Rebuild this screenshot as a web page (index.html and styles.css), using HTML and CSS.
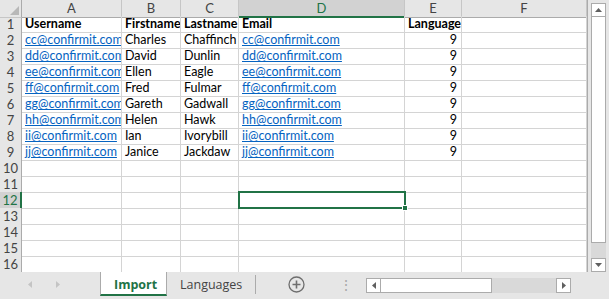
FILE: index.html
```html
<!DOCTYPE html>
<html lang="en">
  <head>
    <meta charset="UTF-8" />
    <meta name="viewport" content="width=device-width, initial-scale=1.0" />
    <title>Import - Workbook</title>
    <link rel="stylesheet" href="styles.css">
  </head>
  <body>
    <div class="workbook">
      <div class="main">
        <div class="sheet">
          <div class="row head">
            <div class="corner"></div>
            <div class="col-head">A</div>
            <div class="col-head">B</div>
            <div class="col-head">C</div>
            <div class="col-head active">D</div>
            <div class="col-head">E</div>
            <div class="col-head">F</div>
          </div>

          <div class="row">
            <div class="row-head">1</div>
            <div class="cell bold">Username</div>
            <div class="cell bold">Firstname</div>
            <div class="cell bold">Lastname</div>
            <div class="cell bold">Email</div>
            <div class="cell bold">Language</div>
            <div class="cell"></div>
          </div>
          <div class="row">
            <div class="row-head">2</div>
            <div class="cell link">cc@confirmit.com</div>
            <div class="cell">Charles</div>
            <div class="cell">Chaffinch</div>
            <div class="cell link">cc@confirmit.com</div>
            <div class="cell num">9</div>
            <div class="cell"></div>
          </div>
          <div class="row">
            <div class="row-head">3</div>
            <div class="cell link">dd@confirmit.com</div>
            <div class="cell">David</div>
            <div class="cell">Dunlin</div>
            <div class="cell link">dd@confirmit.com</div>
            <div class="cell num">9</div>
            <div class="cell"></div>
          </div>
          <div class="row">
            <div class="row-head">4</div>
            <div class="cell link">ee@confirmit.com</div>
            <div class="cell">Ellen</div>
            <div class="cell">Eagle</div>
            <div class="cell link">ee@confirmit.com</div>
            <div class="cell num">9</div>
            <div class="cell"></div>
          </div>
          <div class="row">
            <div class="row-head">5</div>
            <div class="cell link">ff@confirmit.com</div>
            <div class="cell">Fred</div>
            <div class="cell">Fulmar</div>
            <div class="cell link">ff@confirmit.com</div>
            <div class="cell num">9</div>
            <div class="cell"></div>
          </div>
          <div class="row">
            <div class="row-head">6</div>
            <div class="cell link">gg@confirmit.com</div>
            <div class="cell">Gareth</div>
            <div class="cell">Gadwall</div>
            <div class="cell link">gg@confirmit.com</div>
            <div class="cell num">9</div>
            <div class="cell"></div>
          </div>
          <div class="row">
            <div class="row-head">7</div>
            <div class="cell link">hh@confirmit.com</div>
            <div class="cell">Helen</div>
            <div class="cell">Hawk</div>
            <div class="cell link">hh@confirmit.com</div>
            <div class="cell num">9</div>
            <div class="cell"></div>
          </div>
          <div class="row">
            <div class="row-head">8</div>
            <div class="cell link">ii@confirmit.com</div>
            <div class="cell">Ian</div>
            <div class="cell">Ivorybill</div>
            <div class="cell link">ii@confirmit.com</div>
            <div class="cell num">9</div>
            <div class="cell"></div>
          </div>
          <div class="row">
            <div class="row-head">9</div>
            <div class="cell link">jj@confirmit.com</div>
            <div class="cell">Janice</div>
            <div class="cell">Jackdaw</div>
            <div class="cell link">jj@confirmit.com</div>
            <div class="cell num">9</div>
            <div class="cell"></div>
          </div>
          <div class="row">
            <div class="row-head">10</div>
            <div class="cell"></div><div class="cell"></div><div class="cell"></div>
            <div class="cell"></div><div class="cell"></div><div class="cell"></div>
          </div>
          <div class="row">
            <div class="row-head">11</div>
            <div class="cell"></div><div class="cell"></div><div class="cell"></div>
            <div class="cell"></div><div class="cell"></div><div class="cell"></div>
          </div>
          <div class="row">
            <div class="row-head active">12</div>
            <div class="cell"></div><div class="cell"></div><div class="cell"></div>
            <div class="cell"></div><div class="cell"></div><div class="cell"></div>
          </div>
          <div class="row">
            <div class="row-head">13</div>
            <div class="cell"></div><div class="cell"></div><div class="cell"></div>
            <div class="cell"></div><div class="cell"></div><div class="cell"></div>
          </div>
          <div class="row">
            <div class="row-head">14</div>
            <div class="cell"></div><div class="cell"></div><div class="cell"></div>
            <div class="cell"></div><div class="cell"></div><div class="cell"></div>
          </div>
          <div class="row">
            <div class="row-head">15</div>
            <div class="cell"></div><div class="cell"></div><div class="cell"></div>
            <div class="cell"></div><div class="cell"></div><div class="cell"></div>
          </div>
          <div class="row">
            <div class="row-head">16</div>
            <div class="cell"></div><div class="cell"></div><div class="cell"></div>
            <div class="cell"></div><div class="cell"></div><div class="cell"></div>
          </div>

          <!-- selected cell D12 -->
          <div class="selection"><span class="handle"></span></div>
        </div>

        <div class="vscroll">
          <div class="sb-btn">
            <svg width="7" height="4" viewBox="0 0 7 4"><path d="M0 4 L3.5 0 L7 4 Z" fill="#606060"/></svg>
          </div>
          <div class="sb-thumb v"></div>
          <div class="sb-track"></div>
          <div class="sb-btn">
            <svg width="7" height="4" viewBox="0 0 7 4"><path d="M0 0 L3.5 4 L7 0 Z" fill="#606060"/></svg>
          </div>
        </div>
      </div>

      <div class="tabbar">
        <div class="tab-nav">
          <svg width="4" height="7" viewBox="0 0 4 7"><path d="M4 0 L0 3.5 L4 7 Z" fill="#c4c4c4"/></svg>
          <svg width="4" height="7" viewBox="0 0 4 7"><path d="M0 0 L4 3.5 L0 7 Z" fill="#c4c4c4"/></svg>
        </div>
        <div class="tab current">Import</div>
        <div class="tab">Languages</div>
        <div class="tab-sep"></div>
        <div class="add-sheet">
          <svg width="17" height="17" viewBox="0 0 17 17">
            <circle cx="8.5" cy="8.5" r="7.5" fill="none" stroke="#6e6e6e" stroke-width="1.3"/>
            <path d="M8.5 4.5 V12.5 M4.5 8.5 H12.5" stroke="#6e6e6e" stroke-width="1.6"/>
          </svg>
        </div>
        <div class="grip">⋮</div>
        <div class="hscroll">
          <div class="sb-btn">
            <svg width="4" height="7" viewBox="0 0 4 7"><path d="M4 0 L0 3.5 L4 7 Z" fill="#606060"/></svg>
          </div>
          <div class="sb-thumb h"></div>
          <div class="sb-track"></div>
          <div class="sb-btn">
            <svg width="4" height="7" viewBox="0 0 4 7"><path d="M0 0 L4 3.5 L0 7 Z" fill="#606060"/></svg>
          </div>
        </div>
      </div>
    </div>
  </body>
</html>
```

FILE: styles.css
```css
* {
  box-sizing: border-box;
}

body {
  margin: 0;
  font-family: Lato, "Liberation Sans", sans-serif;
  font-size: 12.5px;
  color: #000;
  background: #e6e6e6;
}

.workbook {
  width: 609px;
  height: 299px;
  display: flex;
  flex-direction: column;
  overflow: hidden;
}

.main {
  display: flex;
  height: 272px;
}

/* grid */
.sheet {
  position: relative;
  width: 588px;
  background: #fff;
  border-right: 1px solid #ababab;
  overflow: hidden;
}

.row {
  display: grid;
  grid-template-columns: 22px 100px 59px 58px 166px 57px 1fr;
  height: 16px;
}

.cell {
  border-right: 1px solid #d4d4d4;
  border-bottom: 1px solid #d4d4d4;
  padding: 0 2px 0 3px;
  line-height: 16px;
  white-space: nowrap;
  overflow: hidden;
}

.bold {
  font-weight: bold;
}

.link {
  color: #0563c1;
  text-decoration: underline;
}

.num {
  text-align: right;
  padding-right: 4px;
}

.corner,
.col-head,
.row-head {
  background: #e6e6e6;
  color: #444;
  font-size: 13px;
  border-right: 1px solid #c6c6c6;
  border-bottom: 1px solid #c6c6c6;
  line-height: 16px;
}

.corner {
  position: relative;
  border-right: 1px solid #ababab;
}

.corner::after {
  content: "";
  position: absolute;
  right: 2px;
  bottom: 2px;
  border-left: 9px solid transparent;
  border-bottom: 9px solid #b8b8b8;
}

.col-head {
  text-align: center;
  border-bottom-color: #ababab;
}

.col-head.active {
  background: #d2d2d2;
  color: #217346;
  border-bottom: 2px solid #217346;
}

.row-head {
  text-align: center;
  border-right-color: #ababab;
  border-bottom-color: #d4d4d4;
}

.row-head.active {
  background: #d2d2d2;
  color: #217346;
  border-right: 2px solid #217346;
}

.selection {
  position: absolute;
  left: 238px;
  top: 191px;
  width: 168px;
  height: 18px;
  border: 2px solid #217346;
}

.handle {
  position: absolute;
  right: -4px;
  bottom: -4px;
  width: 6px;
  height: 6px;
  background: #217346;
  border: 1px solid #fff;
}

/* scroll bars */
.vscroll {
  width: 21px;
  padding: 3px 3px 0 3px;
  display: flex;
  flex-direction: column;
}

.sb-btn {
  flex: none;
  width: 15px;
  height: 14px;
  background: #fff;
  border: 1px solid #ababab;
  display: flex;
  align-items: center;
  justify-content: center;
}

.sb-thumb {
  background: #fff;
  border: 1px solid #ababab;
}

.sb-thumb.v {
  height: 226px;
  border-top: none;
}

.sb-track {
  flex: 1;
  background: #d9d9d9;
}

.tabbar {
  flex: 1;
  display: flex;
  align-items: flex-start;
  background: #e6e6e6;
}

.tab-nav {
  width: 100px;
  height: 24px;
  display: flex;
  align-items: center;
  gap: 24px;
  padding-left: 28px;
}

.tab {
  height: 24px;
  line-height: 25px;
  font-family: "Open Sans", sans-serif;
  font-size: 12.5px;
  color: #444;
  padding: 0 13px;
}

.tab.current {
  width: 67px;
  background: #fff;
  color: #217346;
  font-weight: bold;
  border-left: 1px solid #ababab;
  border-right: 1px solid #ababab;
  border-bottom: 2px solid #217346;
}

.tab-sep {
  width: 1px;
  height: 19px;
  margin-top: 3px;
  background: #ababab;
}

.add-sheet {
  width: 80px;
  padding: 4px 0 0 32px;
}

.grip {
  width: 30px;
  color: #a8a8a8;
  font-size: 14px;
  line-height: 26px;
  padding-left: 3px;
}

.hscroll {
  display: flex;
  width: 205px;
  height: 15px;
  margin-top: 6px;
}

.hscroll .sb-btn {
  width: 15px;
  height: 15px;
}

.sb-thumb.h {
  width: 111px;
  border-left: none;
}
```
